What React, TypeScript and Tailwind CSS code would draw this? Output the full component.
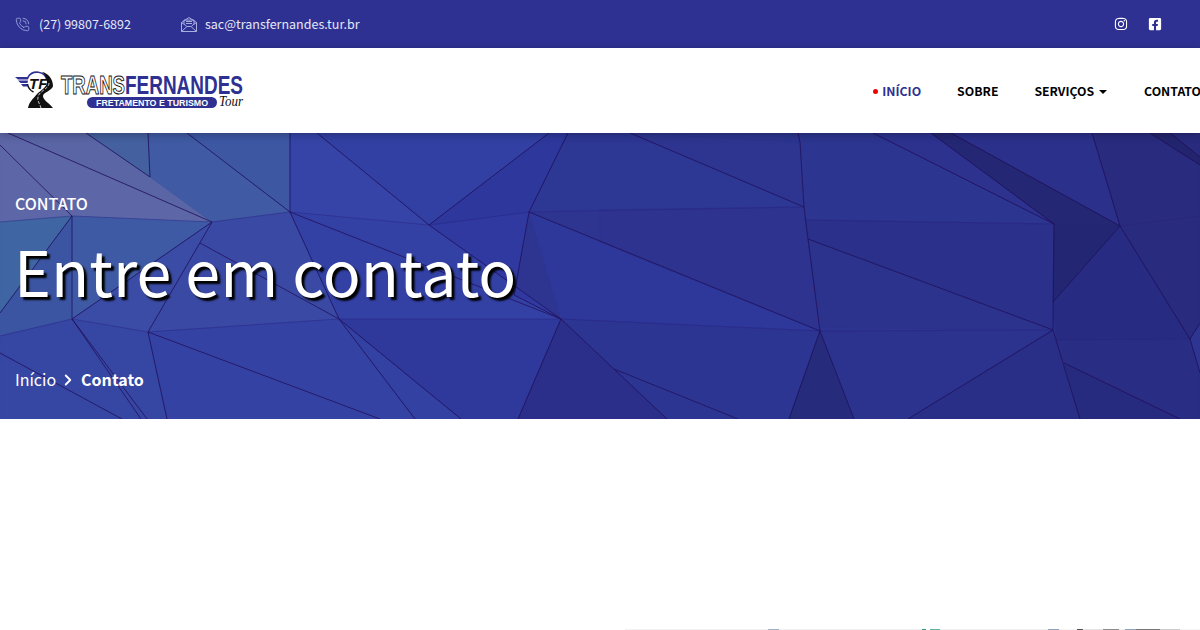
import { PhoneCall, ChevronRight } from "lucide-react";
import { FaFacebookSquare, FaInstagram } from "react-icons/fa";

const facets: [string, string][] = [
  ["0,133 8,133 212,222 72,216 0,222", "#5d66a6"],
  ["8,133 86,133 150,177 212,222", "#5a65a5"],
  ["86,133 148,133 150,177", "#44609f"],
  ["148,133 187,133 290,212 212,222 150,177", "#405ba3"],
  ["187,133 290,133 290,212", "#3d57a3"],
  ["0,222 72,216 0,313", "#3f66a3"],
  ["72,216 212,222 72,319", "#3f5aa4"],
  ["0,313 72,216 72,319 0,336", "#3b55a3"],
  ["212,222 290,212 339,319 148,332", "#3a4aa4"],
  ["72,319 212,222 148,332", "#3a4ca5"],
  ["0,336 72,319 148,332 167,419 0,419", "#3646a3"],
  ["290,133 317,133 429,225 290,212", "#3644a7"],
  ["317,133 549,133 429,225", "#3240a3"],
  ["290,212 429,225 561,319 339,319", "#3341a5"],
  ["429,225 529,212 514,295 561,319", "#3039a0"],
  ["148,332 339,319 415,419 167,419", "#3443a3"],
  ["339,319 461,419 415,419", "#3341a3"],
  ["339,319 561,319 518,419 461,419", "#2f399b"],
  ["561,319 600,357 667,419 518,419", "#2b2f8a"],
  ["549,133 568,133 529,212 429,225", "#2e389c"],
  ["529,212 600,242 820,331 561,319", "#2e389a"],
  ["568,133 630,133 804,207 600,210 529,212", "#2d3794"],
  ["600,210 804,207 820,331 600,242", "#2d338f"],
  ["561,319 820,331 789,419 667,419", "#2c3592"],
  ["789,419 820,331 854,419", "#262b7c"],
  ["820,331 1053,330 908,419 854,419", "#2c338e"],
  ["908,419 1053,330 1080,419", "#292f86"],
  ["630,133 873,133 1054,224 805,220 800,142", "#2c358f"],
  ["805,220 1054,224 1053,330 808,239", "#2b308b"],
  ["808,239 1053,330 822,327", "#2c338d"],
  ["873,133 931,133 1054,224", "#2c328e"],
  ["951,133 1092,133 1120,226", "#2b308b"],
  ["931,133 951,133 1120,226 1054,224", "#242773"],
  ["1054,224 1120,226 1053,302", "#232672"],
  ["1053,302 1120,226 1190,339 1056,340", "#272b81"],
  ["1092,133 1200,133 1200,323 1190,339 1120,226", "#282b7e"],
  ["1150,133 1170,133 1200,157 1200,165", "#22256e"],
  ["1056,340 1190,339 1200,373 1200,419 1180,419 1064,363", "#292e84"],
  ["1064,363 1180,419 1080,419", "#272b7f"],
];

const lines = [
  "8,133 212,222 72,319 72,216 0,313",
  "0,145 72,216",
  "86,133 150,177 148,133",
  "187,133 290,212 290,133",
  "317,133 429,225 561,319 290,212 339,319 415,419",
  "212,222 148,332 167,419",
  "148,332 380,419",
  "200,243 339,319 461,419",
  "72,319 141,419",
  "72,319 147,419",
  "0,353 122,419",
  "429,225 549,133",
  "568,133 529,212 514,295 561,319 518,419",
  "529,212 820,331",
  "561,319 614,369 667,419",
  "614,369 738,419",
  "630,133 804,207",
  "798,133 800,142 804,207 808,239 820,331 789,419",
  "820,331 854,419",
  "873,133 1054,224 1053,330 1080,419",
  "931,133 1054,224",
  "951,133 1120,226 1053,302",
  "808,239 1053,330 908,419",
  "1064,363 1180,419",
  "1092,133 1120,226 1190,339 1200,373",
  "1190,339 1200,323",
  "1150,133 1200,165",
  "1170,133 1200,157",
];

const faintLines = [
  "0,222 72,216 212,222 290,212 429,225 529,212 804,207",
  "0,336 72,319 148,332 339,319 561,319 820,331 1053,330",
  "805,220 1054,224",
  "1120,226 1200,216",
  "1056,340 1190,339",
];

// the top of the next section's picture just shows at the bottom edge
const stripe: [string, string][] = [
  ["w-[143px]", "bg-[#f1f1f1]"],
  ["w-[11px]", "bg-[#9db0c4]"],
  ["w-[143px]", "bg-[#efefef]"],
  ["w-[4px]", "bg-[#2e9c7c]"],
  ["w-[4px]", "bg-[#ffffff]"],
  ["w-[10px]", "bg-[#5fb59c]"],
  ["w-[108px]", "bg-[#f0f0f0]"],
  ["w-[11px]", "bg-[#8ea2bc]"],
  ["w-[18px]", "bg-[#f4f4f4]"],
  ["w-[6px]", "bg-[#555555]"],
  ["w-[20px]", "bg-[#e4e4e4]"],
  ["w-[16px]", "bg-[#8c8c8c]"],
  ["w-[6px]", "bg-[#f1f1f1]"],
  ["w-[11px]", "bg-[#8ea2bc]"],
  ["w-[24px]", "bg-[#777777]"],
  ["w-[20px]", "bg-[#cccccc]"],
];

function Logo() {
  return (
    <svg width="232" height="42" viewBox="0 0 232 42" className="block">
      {/* wing */}
      <path d="M0 7h14l-1 2.500H3zM3 10.500h10l-.5 2.500H5.500zM6 14h7l-.5 2.500H8z" fill="#2e3192" />
      {/* ring and TF */}
      <path d="M13 7a10.500 10.500 0 0 1 19 3" fill="none" stroke="#2e3192" strokeWidth="1.500" />
      <path d="M12.500 14a10.500 10.500 0 0 0 6 8" fill="none" stroke="#111" strokeWidth="1.500" />
      <text x="14" y="19" fontFamily="Liberation Sans, sans-serif" fontStyle="italic" fontWeight="700" fontSize="15" fill="#111">
        TF
      </text>
      {/* road */}
      <path d="M27 2C33 3 38 9 38 16 37 21 28 22 28 26 28 30 34 33 38 38H13C14 32 18 29 22 24 26 20 32 17 32 12 32 8 30 5 27 2z" fill="#111" />
      <path d="M34 13C34 19 24 21 23 27 22 31 25 34 26 38" fill="none" stroke="#fff" strokeWidth="0.800" strokeDasharray="3 1.500" />
      <text
        x="46"
        y="24"
        textLength="64"
        lengthAdjust="spacingAndGlyphs"
        fontFamily="Liberation Sans, sans-serif"
        fontSize="26"
        fontWeight="700"
        fill="#fff"
        stroke="#111"
        strokeWidth="1"
      >
        TRANS
      </text>
      <text
        x="110"
        y="24"
        textLength="118"
        lengthAdjust="spacingAndGlyphs"
        fontFamily="Liberation Sans, sans-serif"
        fontSize="26"
        fontWeight="700"
        fill="#2e3192"
      >
        FERNANDES
      </text>
      <rect x="72" y="27" width="130" height="11" rx="5.500" fill="#2e3192" />
      <text
        x="81"
        y="36"
        textLength="112"
        lengthAdjust="spacingAndGlyphs"
        fontFamily="Liberation Sans, sans-serif"
        fontSize="9"
        fontWeight="700"
        fill="#fff"
      >
        FRETAMENTO E TURISMO
      </text>
      <text x="204" y="36" textLength="24" lengthAdjust="spacingAndGlyphs" fontFamily="Liberation Serif, serif" fontStyle="italic" fontSize="14" fill="#111">
        Tour
      </text>
    </svg>
  );
}

function MailIcon() {
  return (
    <svg width="16" height="15" viewBox="0 0 16 15" fill="none" stroke="#a9aee0" strokeWidth="1" className="ml-[50px]">
      <path d="M.5 5.500 8 .5l7.500 5v9H.5zM.5 14.500 6 9.500h4l5.500 5M.5 5.500 5.500 9M15.500 5.500 10.500 9" />
      <path d="M3 7V3h10v4M5 4.500h6M5 6.500h6" />
    </svg>
  );
}

export default function App() {
  return (
    <div className="w-[1200px] h-[630px] overflow-hidden bg-white font-['Noto_Sans_CJK_SC','Noto_Sans',sans-serif]">
      <div className="h-12 bg-[#2e3192] flex items-center pl-[15px] pr-[38px] text-[12.5px] text-[#e6e7f7]">
        <PhoneCall className="w-[15px] h-[15px] text-[#a9aee0]" strokeWidth={1.25} />
        <span className="ml-[9px]">(27) 99807-6892</span>
        <MailIcon />
        <span className="ml-2">sac@transfernandes.tur.br</span>
        <div className="ml-auto flex items-center gap-5 text-white">
          <FaInstagram className="w-[14px] h-[14px]" />
          <FaFacebookSquare className="w-[14px] h-[14px]" />
        </div>
      </div>

      <div className="relative z-10 h-[85px] bg-white shadow-[0_2px_8px_rgba(0,0,0,0.25)] flex items-center pl-[15px]">
        <Logo />
        <nav className="ml-auto mt-[2px] flex items-center text-[12.25px] font-semibold text-black whitespace-nowrap -mr-px">
          <span className="w-[5px] h-[5px] rounded-full bg-[#f00000] mr-[4px] -mt-[1px]" />
          <span className="text-[#2e3192]">INÍCIO</span>
          <span className="ml-[36px]">SOBRE</span>
          <span className="ml-[36px]">SERVIÇOS</span>
          <span className="ml-[5px] border-x-[4px] border-x-transparent border-t-[4px] border-t-black" />
          <span className="ml-[37px]">CONTATO</span>
        </nav>
      </div>

      <div className="relative h-[286px] overflow-hidden bg-[#2d3590]">
        <svg viewBox="0 133 1200 286" width="1200" height="286" className="absolute inset-0">
          {facets.map(([points, fill]) => (
            <polygon key={points} points={points} fill={fill} stroke={fill} strokeWidth="0.5" />
          ))}
          {faintLines.map((points) => (
            <polyline key={points} points={points} fill="none" stroke="#2c1f7c" strokeWidth="0.6" opacity="0.6" />
          ))}
          {lines.map((points) => (
            <polyline key={points} points={points} fill="none" stroke="#22105c" strokeWidth="0.8" />
          ))}
        </svg>
        <div className="relative flex flex-col items-start pl-[15px] pt-[58px] text-white">
          <p className="text-base font-medium leading-6">CONTATO</p>
          <h1 className="mt-[17px] -ml-px text-[62.75px] leading-[76px] [text-shadow:3px_3px_2px_#000]">
            Entre em contato
          </h1>
          <div className="mt-[59px] flex items-center text-base leading-6">
            <span>Início</span>
            <ChevronRight className="mx-[3px] w-[18px] h-[18px] mt-[2px]" strokeWidth={2.5} />
            <span className="ml-px font-semibold">Contato</span>
          </div>
        </div>
      </div>

      <div className="h-[211px] flex flex-col justify-end pl-[625px]">
        <div className="flex h-px bg-[#f3f3f3]">
          {stripe.map(([width, color], i) => (
            <span key={i} className={`${width} ${color}`} />
          ))}
        </div>
      </div>
    </div>
  );
}
